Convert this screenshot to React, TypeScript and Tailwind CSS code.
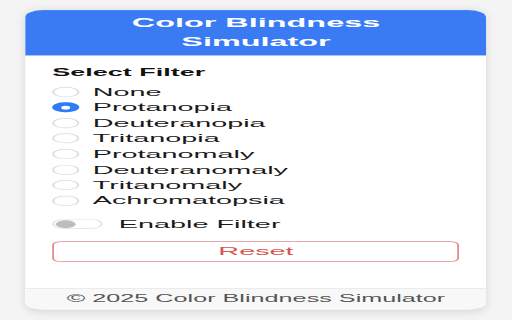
const FILTERS = [
  'None',
  'Protanopia',
  'Deuteranopia',
  'Tritanopia',
  'Protanomaly',
  'Deuteranomaly',
  'Tritanomaly',
  'Achromatopsia',
]

function Radio({ checked }: { checked: boolean }) {
  if (checked) {
    return (
      <span className="flex h-[14px] w-[14.5px] shrink-0 items-center justify-center rounded-full bg-[#2f7cf6]">
        <span className="h-[5px] w-[5px] rounded-full bg-white" />
      </span>
    )
  }
  return <span className="h-[14px] w-[14.5px] shrink-0 rounded-full border border-[#dcdcdc] bg-white" />
}

export default function App() {
  const selected = 'Protanopia'

  return (
    <div className="h-[320px] w-[512px] overflow-hidden bg-[#f4f4f5] font-['Liberation_Sans',Arial,sans-serif]">
      {/* popup is rendered at its own size, then stretched to the frame */}
      <div className="h-[444.44px] w-[284.44px] origin-top-left scale-x-[1.8] scale-y-[0.72] p-[14px]">
        <div className="flex h-full flex-col overflow-hidden rounded-[10px] bg-white shadow-[0_2px_8px_rgba(0,0,0,0.12)]">
          <div className="bg-[#3a7bf4] py-[5px] text-center text-[18px] font-bold leading-[26.4px] text-white">
            Color Blindness
            <br />
            Simulator
          </div>

          <div className="flex-1 px-[15px] pt-[15px]">
            <div className="mb-[7px] text-[15px] font-bold leading-[18px] text-[#111]">Select Filter</div>

            <div className="flex flex-col">
              {FILTERS.map((f) => (
                <label key={f} className="flex h-[21.6px] items-center gap-[8px] text-[16px] text-[#1a1a1a]">
                  <Radio checked={f === selected} />
                  <span>{f}</span>
                </label>
              ))}
            </div>

            <div className="mt-[11px] flex h-[21px] items-center gap-[9px]">
              <span className="flex h-[14px] w-[28px] items-center rounded-full border border-[#e2e2e2] bg-white px-[1px]">
                <span className="h-[11px] w-[11px] rounded-full bg-[#bdbdbd]" />
              </span>
              <span className="text-[16px] text-[#1a1a1a]">Enable Filter</span>
            </div>

            <button className="mt-[13px] h-[29px] w-full rounded-[5px] border border-[#e48a8a] bg-white text-[16px] text-[#d9534f]">
              Reset
            </button>
          </div>

          <div className="flex h-[30.6px] items-center justify-center border-t border-[#e6e6e6] bg-[#f8f8f8] text-[14px] text-[#555]">
            © 2025 Color Blindness Simulator
          </div>
        </div>
      </div>
    </div>
  )
}
